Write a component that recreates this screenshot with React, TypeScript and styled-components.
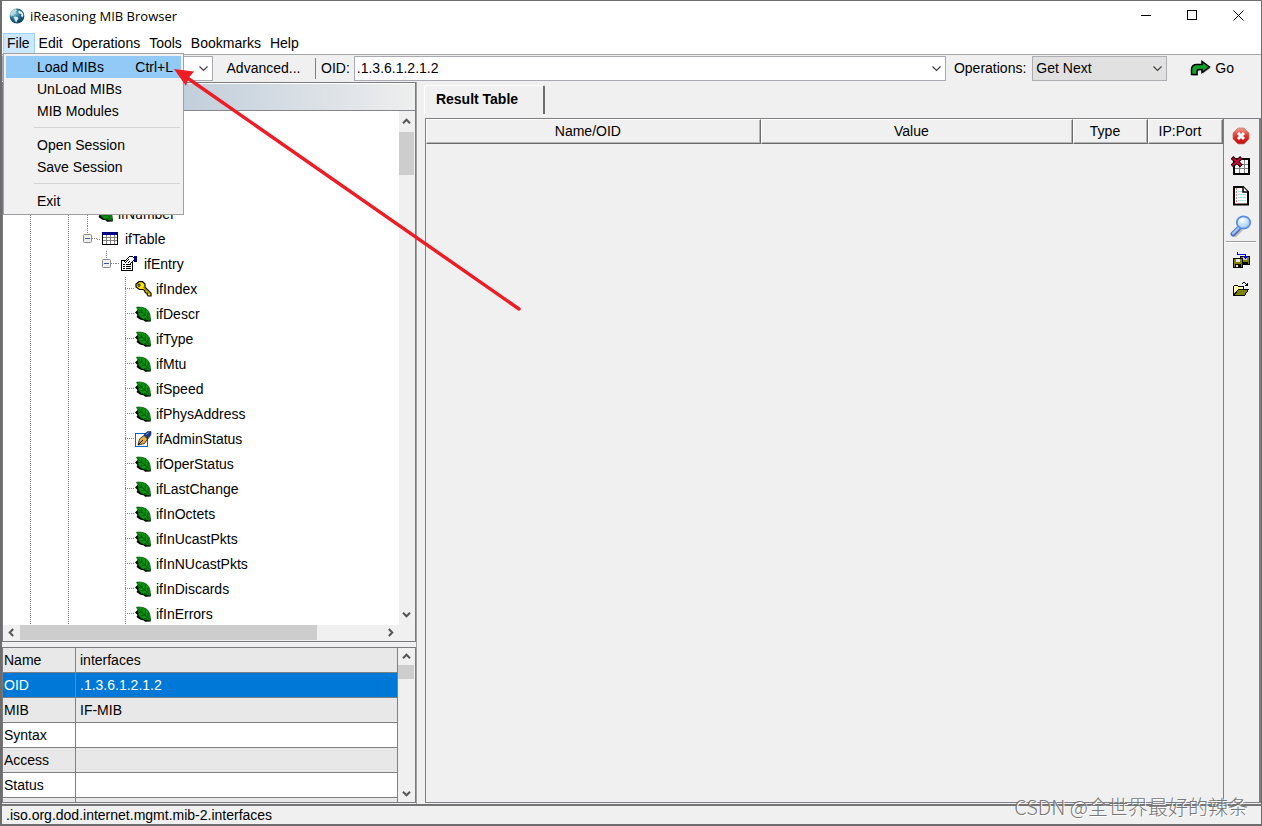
import React from 'react';
import styled, { createGlobalStyle, css } from 'styled-components';

const GlobalStyle = createGlobalStyle`
  *, *::before, *::after { box-sizing: border-box; }
  html, body { margin: 0; height: 100%; }
  body, button, input, select, table {
    font-family: 'Liberation Sans', Arial, sans-serif;
    font-size: 14px;
    line-height: 18px;
    color: #000;
  }
  button { border: 0; padding: 0; margin: 0; background: none; cursor: default; }
  svg { display: block; flex: none; }
`;

/* ---------- window frame ---------- */

const Window = styled.div`
  position: relative;
  display: flex;
  flex-direction: column;
  height: 100vh;
  min-height: 600px;
  overflow: hidden;
  background: #f0f0f0;
  border: solid #6d6d6d;
  border-width: 1px 1px 2px 2px;
`;

const TitleBar = styled.header`
  display: flex;
  align-items: center;
  gap: 5px;
  height: 31px;
  padding: 0 0 2px 7px;
  background: #fff;
`;

const Title = styled.h1`
  flex: 1;
  margin: 0;
  font: 400 13px/18px 'Open Sans', 'Noto Sans', sans-serif;
`;

const WindowButton = styled.button`
  display: flex;
  align-items: center;
  justify-content: center;
  width: 46px;
  height: 28px;
`;

const WindowButtons = styled.div`
  display: flex;
`;

/* ---------- menu bar ---------- */

const MenuBar = styled.nav`
  display: flex;
  flex: none;
  height: 23px;
  padding: 1px 0 0 1px;
  background: #fff;
  border-bottom: 1px solid #a5a5aa;
`;

const MenuSlot = styled.div`
  position: relative;
`;

const MenuButton = styled.button<{ $open?: boolean }>`
  height: 21px;
  padding: 0 5px 2px 4px;
  ${(p) =>
    p.$open &&
    css`
      background: #cce8ff;
      box-shadow: inset 0 0 0 1px #99d1ff;
    `}
`;

const Menu = styled.div`
  position: absolute;
  z-index: 5;
  top: 20px;
  left: 0;
  width: 181px;
  padding: 2px;
  background: #f1f1f1;
  border: 1px solid #a0a0a0;
`;

const MenuItem = styled.button<{ $active?: boolean }>`
  display: flex;
  justify-content: space-between;
  align-items: center;
  width: 100%;
  height: 22px;
  padding: 0 8px 0 31px;
  background: ${(p) => (p.$active ? '#91c9f7' : 'none')};
`;

const MenuSeparator = styled.hr`
  height: 1px;
  margin: 5px 1px 6px 28px;
  border: 0;
  background: #d4d4d4;
`;

/* ---------- address toolbar ---------- */

const Toolbar = styled.div`
  display: flex;
  align-items: center;
  flex: none;
  height: 27px;
  padding-right: 27px;
`;

const Combo = styled.div<{ $width?: number }>`
  display: flex;
  align-items: center;
  height: 25px;
  padding-right: 3px;
  background: #fff;
  border: 1px solid #a9a9b2;
  ${(p) => (p.$width ? `flex: none; width: ${p.$width}px;` : 'flex: 1; min-width: 0;')}
`;

const ComboInput = styled.input`
  flex: 1;
  min-width: 0;
  padding: 0 0 2px 2px;
  border: 0;
  outline: 0;
  background: none;
`;

const AdvancedButton = styled.button`
  width: 102px;
  height: 24px;
  padding: 0 1px 2px 0;
`;

const ToolbarDivider = styled.span`
  width: 1px;
  height: 21px;
  margin-right: 5px;
  background: #808080;
`;

const FieldLabel = styled.label`
  flex: none;
  padding: 0 4px 2px 0;
`;

const OperationField = styled.div`
  display: flex;
  align-items: center;
  gap: 2px;
  margin-left: 8px;
`;

const SelectBox = styled.div`
  display: grid;
  align-items: center;
  width: 135px;
  height: 25px;
  background: #e1e1e1;
  border: 1px solid #adadb2;

  & > * { grid-area: 1 / 1; }
  & > svg { justify-self: end; margin-right: 3px; pointer-events: none; }
`;

const OperationSelect = styled.select`
  width: 100%;
  padding: 0 20px 2px 3px;
  appearance: none;
  border: 0;
  outline: 0;
  background: none;
`;

const GoButton = styled.button`
  display: flex;
  align-items: center;
  gap: 4px;
  margin-left: 23px;
  padding-bottom: 2px;
`;

/* ---------- main split ---------- */

const Main = styled.main`
  display: flex;
  flex: 1;
  min-height: 0;
`;

const Sidebar = styled.aside`
  display: flex;
  flex-direction: column;
  flex: none;
  width: 415px;
  gap: 5px;
  padding-bottom: 1px;
  border-right: 1px solid #a0a0a0;
`;

const TreePanel = styled.section`
  display: flex;
  flex-direction: column;
  flex: 1;
  min-height: 0;
  border: 1px solid #7a7a80;
`;

const TreeHeader = styled.div`
  flex: none;
  height: 28px;
  background: linear-gradient(to right, #9fb6cd, #eeeeee);
  border-top: 1px solid #fff;
  border-bottom: 1px solid #85858c;
`;

const ScrollGrid = styled.div`
  display: grid;
  grid-template-columns: 1fr 15px;
  grid-template-rows: 1fr 15px;
  flex: 1;
  min-height: 0;
  padding: 0 1px 1px 0;
`;

const TreeView = styled.ul`
  min-height: 0;
  margin: 0;
  padding: 90px 0 0 0;
  overflow: hidden;
  list-style: none;
  background: #fff;
`;

const TreeRow = styled.li`
  display: flex;
  align-items: center;
  height: 25px;
  padding-left: 18px;
`;

const dots = (dir: string) =>
  `repeating-linear-gradient(${dir}, #808080 0 1px, transparent 1px 2px)`;

const Guide = styled.span<{ $line: 'none' | 'full' | 'top' | 'child' | 'box' }>`
  display: flex;
  align-items: center;
  flex: none;
  width: 19px;
  height: 25px;
  padding-left: 5px;
  background-repeat: no-repeat;
  ${(p) => {
    switch (p.$line) {
      case 'full':
        return css`
          background-image: ${dots('to bottom')};
          background-size: 1px 100%;
          background-position: 9px 0;
          ${TreeRow}:nth-child(even) & {
            background-position: 9px 1px;
          }
        `;
      case 'child':
        return css`
          background-image: ${dots('to bottom')}, ${dots('to right')};
          background-size: 1px 100%, 10px 1px;
          background-position: 9px 0, 9px 12px;
          ${TreeRow}:nth-child(even) & {
            background-position: 9px 1px, 9px 12px;
          }
        `;
      case 'top':
      case 'box':
        return css`
          background-image: ${dots('to bottom')}, ${dots('to right')};
          background-size: 1px 8px, 5px 1px;
          background-position: 9px 0, 14px 12px;
        `;
      default:
        return '';
    }
  }}
`;

const NodeIcon = styled.span<{ $leaf: boolean }>`
  display: flex;
  width: ${(p) => (p.$leaf ? 21 : 28)}px;
  padding-left: ${(p) => (p.$leaf ? 0 : 5)}px;
  background: ${(p) => (p.$leaf ? 'none' : `${dots('to right')} 0 7px / 3px 1px no-repeat`)};
`;

const Scrollbar = styled.div<{ $horizontal?: boolean }>`
  display: flex;
  flex-direction: ${(p) => (p.$horizontal ? 'row' : 'column')};
  min-height: 0;
  background: #f0f0f0;
`;

const ScrollButton = styled.button<{ $length?: number }>`
  display: flex;
  align-items: center;
  justify-content: center;
  flex: 0 0 ${(p) => p.$length ?? 17}px;
  min-width: 0;
`;

const ScrollTrack = styled.div<{ $horizontal?: boolean }>`
  display: flex;
  flex-direction: ${(p) => (p.$horizontal ? 'row' : 'column')};
  flex: 1;
  min-height: 0;
`;

const ScrollThumb = styled.div<{ $size: number; $horizontal?: boolean }>`
  flex: none;
  background: #cdcdcd;
  ${(p) => (p.$horizontal ? `width: ${p.$size}px;` : `height: ${p.$size}px;`)}
`;

const PropertyPanel = styled.section`
  display: grid;
  grid-template-columns: 1fr 16px;
  flex: none;
  height: 156px;
  overflow: hidden;
  padding-right: 1px;
  border: 1px solid #7a7a80;
`;

const PropertyClip = styled.div`
  overflow: hidden;
  height: 154px;
  border-right: 1px solid #808080;
`;

const PropertyTable = styled.table`
  width: 100%;
  table-layout: fixed;
  border-spacing: 0;
`;

const PropertyRow = styled.tr<{ $tone: 'shade' | 'plain' | 'selected' }>`
  height: 25px;
  color: ${(p) => (p.$tone === 'selected' ? '#fff' : '#000')};
  background: ${(p) =>
    p.$tone === 'selected' ? '#0078d7' : p.$tone === 'shade' ? '#e8e8e8' : '#fff'};

  & > * {
    padding: 0 0 0 4px;
    text-align: left;
    font-weight: 400;
    border-bottom: 1px solid #808080;
  }
  & > th {
    width: 73px;
    padding-left: 1px;
    border-right: 1px solid #808080;
  }
`;

/* ---------- result area ---------- */

const ResultArea = styled.section`
  display: flex;
  flex-direction: column;
  flex: 1;
  min-width: 0;
  padding: 3px 0 1px 7px;
`;

const TabStrip = styled.div`
  display: flex;
  height: 33px;
`;

const Tab = styled.button`
  width: 121px;
  height: 29px;
  padding: 0 14px 2px 0;
  font-weight: 700;
  border: solid;
  border-width: 1px 2px 0 1px;
  border-color: #fff #6b6b6b #fff #fff;
  border-radius: 3px 2px 0 0;
`;

const ResultBody = styled.div`
  display: flex;
  flex: 1;
  min-height: 0;
  margin-left: 1px;
  border: solid #80808a;
  border-width: 1px 0 1px 1px;
`;

const ResultPane = styled.div`
  flex: 1;
  min-width: 0;
  border-right: 1px solid #80808a;
`;

const ResultTable = styled.table`
  width: 100%;
  table-layout: fixed;
  border-spacing: 0;
`;

const ColumnHead = styled.th<{ $width?: string }>`
  width: ${(p) => p.$width ?? 'auto'};
  height: 25px;
  padding: 0 11px 2px 0;
  font-weight: 400;
  border: 1px solid;
  border-color: #fff #6b6b6b #6b6b6b #fff;
  box-shadow: inset -1px -1px 0 #b4b4b4;
`;

const SideTools = styled.div`
  display: flex;
  flex-direction: column;
  align-items: center;
  width: 37px;
  padding: 2px 1px 0 0;
  border-right: 2px solid #7d7d7d;
`;

const ToolButton = styled.button`
  display: flex;
  align-items: center;
  justify-content: center;
  width: 30px;
  height: 30px;
`;

const ToolSeparator = styled.hr`
  width: 30px;
  height: 2px;
  margin: 0 0 1px;
  border: 0;
  background: #9c9c9c;
  border-bottom: 1px solid #fff;
`;

const StatusBar = styled.footer`
  flex: none;
  height: 20px;
  padding: 0 4px;
  border-top: 2px solid #757575;
`;

/* ---------- overlays ---------- */

const Pointer = styled.svg`
  position: absolute;
  z-index: 8;
  left: 168px;
  top: 60px;
  pointer-events: none;
`;

const Watermark = styled.div`
  position: absolute;
  z-index: 8;
  right: 13px;
  bottom: 3px;
  font: 300 20px/28px 'Noto Sans CJK SC', sans-serif;
  color: #777;
  text-shadow: 1px 1px 0 #fff;
  pointer-events: none;
`;

/* ---------- icons ---------- */

const Chevron = () => (
  <svg width="11" height="11" viewBox="0 0 11 11" fill="none" stroke="#444" strokeWidth="1.2">
    <path d="M1.500 3.500 5.500 7.500 9.500 3.500" />
  </svg>
);

const ARROW_TURN = { up: 0, right: 90, down: 180, left: 270 };

const ScrollArrow = ({ dir }: { dir: keyof typeof ARROW_TURN }) => (
  <svg width="9" height="9" viewBox="0 0 9 9" fill="none" stroke="#555" strokeWidth="2">
    <path d="M1 6.2 4.5 2.7 8 6.2" transform={`rotate(${ARROW_TURN[dir]} 4.5 4.5)`} />
  </svg>
);

const GlobeIcon = () => (
  <svg width="16" height="16" viewBox="0 0 16 16">
    <defs>
      <radialGradient id="sea" cx="0.35" cy="0.3" r="0.8">
        <stop offset="0" stopColor="#8fc4d8" />
        <stop offset="0.5" stopColor="#1c6c92" />
        <stop offset="1" stopColor="#063450" />
      </radialGradient>
    </defs>
    <circle cx="8" cy="8" r="7.4" fill="url(#sea)" />
    <path d="M1 6C2 3 4 1.200 6.500 1L8 2.500 6.500 4 7 5.500 4.500 6 5 8 3 7.500 2 9Z" fill="#b9dbe2" />
    <path d="M5.500 8.500 8.500 9 9.500 10.500 8 12.500 7.500 14.500 6 13 5.500 11 4.500 9.500Z" fill="#d9ebee" />
    <path d="M10 2.500 13 4 14.500 7 13.500 9.500 12 8 12.500 6 10 5.500 9.200 4Z" fill="#e9f4f5" />
  </svg>
);

const GoIcon = () => (
  <svg width="21" height="16" viewBox="0 0 21 16">
    <path
      d="M1.500 14.500V9.500C1.500 6 4 4.500 7 4.500H12V1.500L19.500 7 12 12.500V9.500H9C7.500 9.500 7 10.500 7 11.500V14.500Z"
      fill="#555" opacity="0.6" transform="translate(1 1)"
    />
    <path
      d="M1.500 14.500V9.500C1.500 6 4 4.500 7 4.500H12V1.500L19.500 7 12 12.500V9.500H9C7.500 9.500 7 10.500 7 11.500V14.500Z"
      fill="#0fa32c" stroke="#000" strokeWidth="1.500"
    />
  </svg>
);

const LeafIcon = () => (
  <svg width="16" height="16" viewBox="0 0 16 16">
    <path d="M2.500 4 0 6.500 2.500 9 1.500 11 5 13.500 9 14.500 10 15.800 15.800 15.500 15.500 13Z" fill="#000" />
    <path d="M1.500 1.200C5 .800 9 1.200 12 3.500 15 6 15.200 10 15.600 14.500 11 14 7 13.500 4.800 11 2.500 8.500 3.800 4 1.500 1.200Z" fill="#0a9412" stroke="#064d09" strokeWidth="0.700" />
    <path d="M2.500 2.500 15 13.500M6.500 2.500 7 6.200M10.500 3.500 10.200 9M13.300 6.500 12.800 11.500M4 6.500 7 6.200M5.500 10 10.200 9M9 12.800 13 11.700" fill="none" stroke="#054f08" strokeWidth="0.800" />
  </svg>
);

const KeyIcon = () => (
  <svg width="17" height="16" viewBox="0 0 17 16">
    <path d="M4 .700H7.500L10 3V6.200L16 12.200V15H13.200L12.200 13.500V12H10.800L9.800 10.800V9.500L8 8.500H4.500L1 6V3Z" fill="#ffe800" stroke="#000" strokeWidth="1.200" />
    <path d="M3 3.200H5V5.200H3Z" fill="#fff" stroke="#000" strokeWidth="0.900" />
    <path d="M8 6 14.500 13" stroke="#8a7c00" strokeWidth="1" />
  </svg>
);

const PenIcon = () => (
  <svg width="17" height="16" viewBox="0 0 17 16">
    <rect x="0.500" y="2.500" width="12" height="13" fill="#fff" stroke="#0a62c4" />
    <path d="M3 14 4.500 8 9 4.500 12.500 8 9.500 12.500Z" fill="#e5b04a" stroke="#3a2a10" strokeWidth="0.900" />
    <path d="M3 14 8 9" stroke="#000" />
    <path d="M9 4 12 .800 16 .500 15.800 4 13 7.800Z" fill="#1d3f86" stroke="#0d1f4c" strokeWidth="0.700" />
    <path d="M11 3.500 13.500 1.500" stroke="#8fa9df" />
  </svg>
);

const TableIcon = () => (
  <svg width="16" height="13" viewBox="0 0 16 13" shapeRendering="crispEdges">
    <rect width="16" height="13" fill="#000" />
    <rect width="16" height="3" fill="#000080" />
    <path d="M1 3H15V12H1Z" fill="#fff" />
    <path d="M1 5.500H15M1 8.500H15M4.500 3V12M8.500 3V12M12.500 3V12" stroke="#808080" />
  </svg>
);

const EntryIcon = () => (
  <svg width="16" height="15" viewBox="0 0 16 15" shapeRendering="crispEdges">
    <path d="M.500 4.500H11.500V14.500H.500Z" fill="#fff" stroke="#000" />
    <path d="M2 8.500H4M5 8.500H10M2 10.500H4M5 10.500H10M2 12.500H4M5 12.500H10" stroke="#000" />
    <path d="M3.500 5.500 6.500 2.500 8.500 .500H11.500L13.500 1.500V4.500H11.500L8.500 7.500 6.500 6.500 5.500 7.500Z" fill="#fff" />
    <path d="M3 5.500H4M4 4.500H5M5 3.500H6M6 2.500H7M7 1.500H8M8 .500H12M12 1.500H13M12 4.500H13M11 5.500H12M10 6.500H11M9 7.500H10M4 6.500H5M5 5.500H6M6 4.500H7M7 3.500H8M8 5.500H9M7 6.500H8" stroke="#000" />
    <rect x="13" y="0" width="3" height="6" fill="#000080" />
  </svg>
);

const CollapseBox = () => (
  <svg width="9" height="9" viewBox="0 0 9 9">
    <rect x="0.500" y="0.500" width="8" height="8" rx="1" fill="#f0f0f0" stroke="#8a8a8a" />
    <path d="M2 4.500H7" stroke="#3c55a5" />
  </svg>
);

const StopIcon = () => (
  <svg width="18" height="18" viewBox="0 0 18 18">
    <defs>
      <linearGradient id="stop" x1="0" y1="0" x2="0" y2="1">
        <stop offset="0" stopColor="#f0a090" />
        <stop offset="0.500" stopColor="#d8352a" />
        <stop offset="1" stopColor="#c00c0c" />
      </linearGradient>
    </defs>
    <path d="M6 1H12L17 6V12L12 17H6L1 12V6Z" fill="url(#stop)" stroke="#c8706a" strokeWidth="0.700" />
    <path d="M6 6 12 12M12 6 6 12" stroke="#fff" strokeWidth="3" />
  </svg>
);

const ClearTableIcon = () => (
  <svg width="20" height="20" viewBox="0 0 20 20" shapeRendering="crispEdges">
    <path d="M3 3H18V18H3Z" fill="#fff" stroke="#000" strokeWidth="2" />
    <path d="M4 8.500H17M4 12.500H17M8.500 4V17M13.500 4V17" stroke="#808080" />
    <path d="M1 1.500 10.500 10M10.500 1.500 1 10" stroke="#000" strokeWidth="4" shapeRendering="auto" />
    <path d="M1.500 2 10 9.500M10 2 1.500 9.500" stroke="#d4003c" strokeWidth="2.200" shapeRendering="auto" />
  </svg>
);

const PageIcon = () => (
  <svg width="16" height="20" viewBox="0 0 16 20">
    <path d="M1 1H10L15 6V18.500H1Z" fill="#fff" stroke="#000" strokeWidth="2" />
    <path d="M5 5.500H9M5 8.500H13M5 11.500H13M5 14.500H13" stroke="#a8e4e4" />
    <path d="M3.500 2V18" stroke="#f08080" strokeDasharray="2 1" />
    <path d="M10 1V6H15" fill="#fff" stroke="#000" strokeWidth="1.500" />
  </svg>
);

const SearchIcon = () => (
  <svg width="22" height="22" viewBox="0 0 22 22">
    <defs>
      <radialGradient id="lens" cx="0.400" cy="0.300" r="0.700">
        <stop offset="0" stopColor="#fff" />
        <stop offset="1" stopColor="#9cc8f8" />
      </radialGradient>
    </defs>
    <path d="M5 21 11 15" stroke="#bbb" strokeWidth="3" strokeLinecap="round" />
    <path d="M3 19 8.500 13.500" stroke="#4a6fc0" strokeWidth="4.800" strokeLinecap="round" />
    <path d="M3 18.500 8.500 13" stroke="#a6c4f4" strokeWidth="2.400" strokeLinecap="round" />
    <ellipse cx="13.500" cy="7.500" rx="6.700" ry="6.200" fill="url(#lens)" stroke="#5a8ee0" strokeWidth="1.800" />
  </svg>
);

const SaveAllIcon = () => (
  <svg width="17" height="17" viewBox="0 0 17 17" shapeRendering="crispEdges">
    <path d="M7.500 5.500H16.500V13.500H7.500Z" fill="#808000" stroke="#000" />
    <path d="M10 6H14V9H10Z" fill="#c8c8c8" />
    <path d="M10 11H15V13H10Z" fill="#000" />
    <path d="M.500 7.500H9.500V16.500H.500Z" fill="#808000" stroke="#000" />
    <path d="M3 8H7V11H3Z" fill="#e8e8e8" />
    <path d="M2 13H8V16H2Z" fill="#000" />
    <path d="M3 14H5V16H3Z" fill="#e8e8e8" />
    <path d="M4.500 1V3.500H12.500V6" fill="none" stroke="#0000e8" />
    <path d="M10 5H15V6H14V7H13V8H12V7H11V6H10Z" fill="#0000e8" />
  </svg>
);

const OpenIcon = () => (
  <svg width="17" height="14" viewBox="0 0 17 14" shapeRendering="crispEdges">
    <path d="M.500 12.500V4.500L1.500 3.500H4.500L5.500 4.500H10.500V7.500H5.500Z" fill="#ffffa0" stroke="#000" />
    <path d="M.500 13.500 5.500 7.500H15.500L11.500 13.500Z" fill="#808000" stroke="#000" />
    <path d="M9 1.500H10M10 .500H12M12 1.500H13M13 2.500H14M12 3.500H15M14.500 1V4" stroke="#000" />
  </svg>
);

const Minimise = () => (
  <svg width="11" height="11" viewBox="0 0 11 11" stroke="#000" shapeRendering="crispEdges">
    <path d="M0 5.500H10" />
  </svg>
);
const Maximise = () => (
  <svg width="11" height="11" viewBox="0 0 11 11" stroke="#000" fill="none">
    <rect x="0.500" y="0.500" width="9" height="9" />
  </svg>
);
const Close = () => (
  <svg width="11" height="11" viewBox="0 0 11 11" stroke="#000">
    <path d="M.500 .500 10.500 10.500M10.500 .500 .500 10.500" />
  </svg>
);

/* ---------- data ---------- */

type NodeKind = 'leaf' | 'key' | 'pen' | 'table' | 'entry';
type Line = 'none' | 'full' | 'top' | 'child' | 'box';

const nodeIcons: Record<NodeKind, React.FC> = {
  leaf: LeafIcon,
  key: KeyIcon,
  pen: PenIcon,
  table: TableIcon,
  entry: EntryIcon,
};

const base: Line[] = ['full', 'none', 'full'];
const column = (label: string, kind: NodeKind = 'leaf') => ({
  label,
  kind,
  lines: [...base, 'none', 'none', 'child'] as Line[],
});

const nodes: { label: string; kind: NodeKind; lines: Line[] }[] = [
  { label: 'ifNumber', kind: 'leaf', lines: [...base, 'child'] },
  { label: 'ifTable', kind: 'table', lines: [...base, 'box'] },
  { label: 'ifEntry', kind: 'entry', lines: [...base, 'none', 'box'] },
  column('ifIndex', 'key'),
  column('ifDescr'),
  column('ifType'),
  column('ifMtu'),
  column('ifSpeed'),
  column('ifPhysAddress'),
  column('ifAdminStatus', 'pen'),
  column('ifOperStatus'),
  column('ifLastChange'),
  column('ifInOctets'),
  column('ifInUcastPkts'),
  column('ifInNUcastPkts'),
  column('ifInDiscards'),
  column('ifInErrors'),
];

const properties: [string, string, 'shade' | 'plain' | 'selected'][] = [
  ['Name', 'interfaces', 'shade'],
  ['OID', '.1.3.6.1.2.1.2', 'selected'],
  ['MIB', 'IF-MIB', 'shade'],
  ['Syntax', '', 'plain'],
  ['Access', '', 'shade'],
  ['Status', '', 'plain'],
  ['', '', 'shade'],
];

const menus = ['Edit', 'Operations', 'Tools', 'Bookmarks', 'Help'];

export default function App() {
  return (
    <>
      <GlobalStyle />
      <Window>
        <TitleBar>
          <GlobeIcon />
          <Title>iReasoning MIB Browser</Title>
          <WindowButtons>
            <WindowButton aria-label="Minimise"><Minimise /></WindowButton>
            <WindowButton aria-label="Maximise"><Maximise /></WindowButton>
            <WindowButton aria-label="Close"><Close /></WindowButton>
          </WindowButtons>
        </TitleBar>

        <MenuBar>
          <MenuSlot>
            <MenuButton $open>File</MenuButton>
            <Menu role="menu">
              <MenuItem role="menuitem" $active><span>Load MIBs</span><span>Ctrl+L</span></MenuItem>
              <MenuItem role="menuitem">UnLoad MIBs</MenuItem>
              <MenuItem role="menuitem">MIB Modules</MenuItem>
              <MenuSeparator />
              <MenuItem role="menuitem">Open Session</MenuItem>
              <MenuItem role="menuitem">Save Session</MenuItem>
              <MenuSeparator />
              <MenuItem role="menuitem">Exit</MenuItem>
            </Menu>
          </MenuSlot>
          {menus.map((m) => (
            <MenuButton key={m}>{m}</MenuButton>
          ))}
        </MenuBar>

        <Toolbar>
          <Combo $width={211}>
            <ComboInput aria-label="Address" />
            <Chevron />
          </Combo>
          <AdvancedButton>Advanced...</AdvancedButton>
          <ToolbarDivider />
          <FieldLabel htmlFor="oid">OID:</FieldLabel>
          <Combo>
            <ComboInput id="oid" defaultValue=".1.3.6.1.2.1.2" />
            <Chevron />
          </Combo>
          <OperationField>
            <FieldLabel htmlFor="operation">Operations:</FieldLabel>
            <SelectBox>
              <OperationSelect id="operation">
                <option>Get Next</option>
              </OperationSelect>
              <Chevron />
            </SelectBox>
          </OperationField>
          <GoButton><GoIcon />Go</GoButton>
        </Toolbar>

        <Main>
          <Sidebar>
            <TreePanel>
              <TreeHeader />
              <ScrollGrid>
                <TreeView>
                  {nodes.map((n) => {
                    const Icon = nodeIcons[n.kind];
                    return (
                      <TreeRow key={n.label}>
                        {n.lines.map((line, i) => (
                          <Guide key={i} $line={line}>
                            {line === 'box' && <CollapseBox />}
                          </Guide>
                        ))}
                        <NodeIcon $leaf={n.kind !== 'table' && n.kind !== 'entry'}><Icon /></NodeIcon>
                        {n.label}
                      </TreeRow>
                    );
                  })}
                </TreeView>
                <Scrollbar>
                  <ScrollButton $length={21} aria-label="Scroll up"><ScrollArrow dir="up" /></ScrollButton>
                  <ScrollTrack><ScrollThumb $size={43} /></ScrollTrack>
                  <ScrollButton $length={21} aria-label="Scroll down"><ScrollArrow dir="down" /></ScrollButton>
                </Scrollbar>
                <Scrollbar $horizontal>
                  <ScrollButton aria-label="Scroll left"><ScrollArrow dir="left" /></ScrollButton>
                  <ScrollTrack $horizontal><ScrollThumb $horizontal $size={297} /></ScrollTrack>
                  <ScrollButton aria-label="Scroll right"><ScrollArrow dir="right" /></ScrollButton>
                </Scrollbar>
              </ScrollGrid>
            </TreePanel>

            <PropertyPanel>
              <PropertyClip>
                <PropertyTable>
                  <tbody>
                    {properties.map(([name, value, tone]) => (
                      <PropertyRow key={name} $tone={tone}>
                        <th scope="row">{name}</th>
                        <td>{value}</td>
                      </PropertyRow>
                    ))}
                  </tbody>
                </PropertyTable>
              </PropertyClip>
              <Scrollbar>
                <ScrollButton aria-label="Scroll up"><ScrollArrow dir="up" /></ScrollButton>
                <ScrollTrack><ScrollThumb $size={14} /></ScrollTrack>
                <ScrollButton aria-label="Scroll down"><ScrollArrow dir="down" /></ScrollButton>
              </Scrollbar>
            </PropertyPanel>
          </Sidebar>

          <ResultArea>
            <TabStrip role="tablist">
              <Tab role="tab" aria-selected="true">Result Table</Tab>
            </TabStrip>
            <ResultBody>
              <ResultPane>
                <ResultTable>
                  <thead>
                    <tr>
                      <ColumnHead $width="42%">Name/OID</ColumnHead>
                      <ColumnHead>Value</ColumnHead>
                      <ColumnHead $width="75px">Type</ColumnHead>
                      <ColumnHead $width="75px">IP:Port</ColumnHead>
                    </tr>
                  </thead>
                </ResultTable>
              </ResultPane>
              <SideTools>
                <ToolButton aria-label="Stop"><StopIcon /></ToolButton>
                <ToolButton aria-label="Clear table"><ClearTableIcon /></ToolButton>
                <ToolButton aria-label="New page"><PageIcon /></ToolButton>
                <ToolButton aria-label="Find"><SearchIcon /></ToolButton>
                <ToolSeparator />
                <ToolButton aria-label="Save all"><SaveAllIcon /></ToolButton>
                <ToolButton aria-label="Open"><OpenIcon /></ToolButton>
              </SideTools>
            </ResultBody>
          </ResultArea>
        </Main>

        <StatusBar>.iso.org.dod.internet.mgmt.mib-2.interfaces</StatusBar>

        <Pointer width="360" height="256" viewBox="0 0 360 256">
          <path d="M16 16 349 248" stroke="#ee1c24" strokeWidth="3.4" strokeLinecap="round" />
          <path d="M4 8 24 10.500 18.500 17 16 25Z" fill="#ee1c24" />
        </Pointer>
        <Watermark>CSDN @全世界最好的辣条</Watermark>
      </Window>
    </>
  );
}
